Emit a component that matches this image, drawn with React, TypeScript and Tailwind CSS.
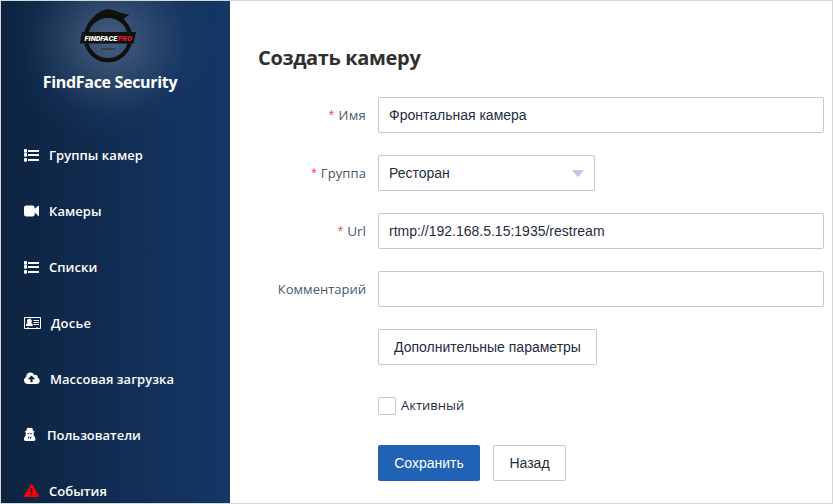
import type { ReactNode } from 'react';

function Icon({ width, children, className = 'fill-white' }: { width: number; children: ReactNode; className?: string }) {
  return (
    <svg width={width} height={15} viewBox={`0 0 ${width} 15`} className={`mr-[10px] -mt-px shrink-0 ${className}`}>
      {children}
    </svg>
  );
}

const ListIcon = () => (
  <Icon width={15}>
    {[3, 7, 12].map((y) => (
      <g key={y}>
        <rect x="0" y={y - 0.9} width="3" height="3.600" rx="1" />
        <rect x="4" y={y} width="11" height="2" rx="0.3" />
      </g>
    ))}
  </Icon>
);

const CameraIcon = () => (
  <Icon width={15}>
    <path d="M2.300 2.500h6.100a2.300 2.300 0 0 1 2.300 2.300v1.200l3.400-3.200c.4-.3.9-.1.9.4v9.200c0 .5-.5.7-.9.4l-3.400-3.200v1.600A2.300 2.300 0 0 1 8.400 13.500H2.300A2.300 2.300 0 0 1 0 11.200V4.800A2.300 2.300 0 0 1 2.300 2.500Z" />
  </Icon>
);

const CardIcon = () => (
  <Icon width={17}>
    <path fillRule="evenodd" d="M1 2h15a1 1 0 0 1 1 1V13a1 1 0 0 1-1 1H1a1 1 0 0 1-1-1V3a1 1 0 0 1 1-1ZM1 3v10h2.500v-1h1v1h8v-1h1v1H16V3Z" />
    <path d="M2 11c0-1.800.5-2.900 1.700-2.900a2.500 2.500 0 1 1 3.400 0c1.200 0 1.700 1.100 1.700 2.900Z" />
    <path d="M9.500 5H15v1H9.500ZM9.500 7H15v1H9.500ZM9.500 9H15v1H9.500Z" />
  </Icon>
);

const CloudIcon = () => (
  <Icon width={16}>
    <path fillRule="evenodd" d="M3.700 13A3.700 3.700 0 0 1 2.150 5.950C2 3.500 4 1.500 6.400 1.500c1.900 0 3.400 1.100 4 2.700A2.150 2.150 0 0 1 13.600 6.800 3.200 3.200 0 0 1 12.900 13ZM7.500 4.400 4.300 7.600v.6h2.100v3.100h2.200V8.200h2.100v-.6Z" />
  </Icon>
);

const UserIcon = () => (
  <Icon width={13}>
    <path fillRule="evenodd" d="M2.200 4 2.800 1.700C3.200.5 4.300.5 5.100.9c.5.200.7.200 1.200 0 .9-.4 1.900-.4 2.300.8L9.200 4l1.400.6c.4.400 0 .8-1.100 1v1.200c.4 0 .7.200.5.600l-.7 1c1.400.5 2.100 2.200 2.100 4.200 0 1-.6 1.400-1.500 1.400H1.500C.6 14 0 13.600 0 12.600c0-2 .7-3.700 2.100-4.200l-.7-1c-.2-.4.1-.6.5-.6V5.600C.8 5.400.4 5 .8 4.600ZM3.200 6.200c0 .7.400 1 1.100 1 .6 0 .9-.3 1-.6h.8c.1.300.4.600 1 .6.700 0 1.100-.3 1.100-1ZM4 9.400l.7 3.300.7-2.600Zm3.400 0L6 10.100l.7 2.600Z" />
  </Icon>
);

const WarningIcon = () => (
  <Icon width={15} className="fill-[#f90008]">
    <path fillRule="evenodd" d="M6.600 1.500a1 1 0 0 1 1.800 0l6.400 11.100c.4.700 0 1.400-.9 1.400H1.100c-.9 0-1.300-.7-.9-1.400ZM6.500 5l.2 4.200h1.600L8.500 5Zm.1 5.400V12h1.800v-1.600Z" />
  </Icon>
);

const menu: { label: string; icon: ReactNode; spacing: string }[] = [
  { label: 'Группы камер', icon: <ListIcon />, spacing: 'tracking-[0.05px]' },
  { label: 'Камеры', icon: <CameraIcon />, spacing: 'tracking-[0.05px]' },
  { label: 'Списки', icon: <ListIcon />, spacing: 'tracking-[0.05px]' },
  { label: 'Досье', icon: <CardIcon />, spacing: 'tracking-[0.2px]' },
  { label: 'Массовая загрузка', icon: <CloudIcon />, spacing: 'tracking-[0.03px]' },
  { label: 'Пользователи', icon: <UserIcon />, spacing: 'tracking-[-0.03px]' },
  { label: 'События', icon: <WarningIcon />, spacing: 'tracking-[0.05px]' },
];

function Logo() {
  return (
    <svg width="58" height="56" viewBox="80 8 58 56" className="shrink-0">
      <circle cx="108" cy="38" r="22.200" fill="none" stroke="#10100f" strokeWidth="4.200" />
      <path d="M87 25C91 19 98 10.500 107 9.300c7-.7 11 4.500 22.500 4.900L123.500 19l3 4.500C119 16 101 13 90 25Z" fill="#10100f" />
      <path d="M82 32H136L133.500 43.500H80Z" fill="#10100f" />
      <rect x="101" y="48" width="14" height="2" fill="#3a3f45" />
      <text x="117.200" y="40.700" textAnchor="end" className="fill-white font-['Roboto',sans-serif] text-[7.6px] font-black tracking-[-0.1px] italic">FINDFACE</text>
      <text x="117.700" y="40.700" className="fill-[#e51540] font-['Roboto',sans-serif] text-[7.6px] font-black tracking-[-0.2px] italic">PRO</text>
    </svg>
  );
}

function Row({ label, required, spacing = 'text-[13px]', children }: { label?: string; required?: boolean; spacing?: string; children?: ReactNode }) {
  return (
    <div className="mb-[22px] flex h-9 items-center">
      <div className={`mr-3 w-[108px] pt-px text-right whitespace-nowrap text-[#48576a] ${spacing}`}>
        {required && <span className="mr-1 font-['Liberation_Sans',sans-serif] text-[14px] text-[#ff4949]">*</span>}
        {label}
      </div>
      {children}
    </div>
  );
}

const field = "h-9 rounded-[2px] border border-[#bfc8dc] bg-white font-['Liberation_Sans',Arial,sans-serif] text-[14px] text-[#1f2d3d]";

export default function App() {
  return (
    <div className="flex h-[504px] w-[833px] overflow-hidden border border-[#d5d6d6] bg-white font-['Open_Sans','Noto_Sans',sans-serif]">
      <aside className="flex w-[229px] shrink-0 flex-col overflow-hidden bg-[radial-gradient(ellipse_105px_100px_at_108px_40px,rgba(130,150,175,0.48),rgba(110,135,165,0.26)_42%,rgba(60,100,150,0.08)_75%,transparent_100%),linear-gradient(90deg,#0d2340,#153766)]">
        <div className="flex h-[126px] shrink-0 flex-col items-center pt-[7px]">
          <div className="mr-[13px] flex"><Logo /></div>
          <div className="mr-[11px] mt-[6px] text-[16px] leading-6 font-bold tracking-[-0.32px] whitespace-nowrap text-white">FindFace Security</div>
        </div>
        <nav className="shrink-0">
          {menu.map((item) => (
            <a key={item.label} className="flex h-14 items-center pl-[23px] text-[13px] font-semibold whitespace-nowrap text-white">
              {item.icon}
              <span className={`pt-[2px] ${item.spacing}`}>{item.label}</span>
            </a>
          ))}
        </nav>
      </aside>
      <main className="flex-1 pl-7">
        <h1 className="mt-[39px] mb-[21px] text-[20px] leading-9 font-bold tracking-[-0.35px] text-[#303030]">Создать камеру</h1>
        <Row label="Имя" required spacing="text-[13px] tracking-[0.3px]">
          <input className={`${field} w-[446px] px-[10px]`} defaultValue="Фронтальная камера" />
        </Row>
        <Row label="Группа" required spacing="text-[13px] tracking-[0.1px]">
          <div className={`${field} flex w-[217px] items-center justify-between px-[10px]`}>
            Ресторан
            <svg width="12" height="7" viewBox="0 0 12 7" className="fill-[#bfc8dc]"><path d="M0 0H12L7 6.300Q6 7 5 6.300Z" /></svg>
          </div>
        </Row>
        <Row label="Url" required spacing="text-[13.5px]">
          <input className={`${field} w-[446px] px-[10px]`} defaultValue="rtmp://192.168.5.15:1935/restream" />
        </Row>
        <Row label="Комментарий">
          <input className={`${field} w-[446px] px-[10px]`} />
        </Row>
        <Row>
          <button className={`${field} w-[219px] whitespace-nowrap`}>Дополнительные параметры</button>
        </Row>
        <Row>
          <label className="flex items-center pt-[2px] text-[13px] text-[#1f2d3d]">
            <span className="mr-[5px] h-[18px] w-[18px] rounded-[2px] border border-[#bfc8dc]" />
            Активный
          </label>
        </Row>
        <Row>
          <button className="h-9 w-[102px] rounded-[2px] bg-[#2062b5] font-['Liberation_Sans',Arial,sans-serif] text-[14px] text-white">Сохранить</button>
          <button className={`${field} ml-[13px] w-[73px]`}>Назад</button>
        </Row>
      </main>
    </div>
  );
}
